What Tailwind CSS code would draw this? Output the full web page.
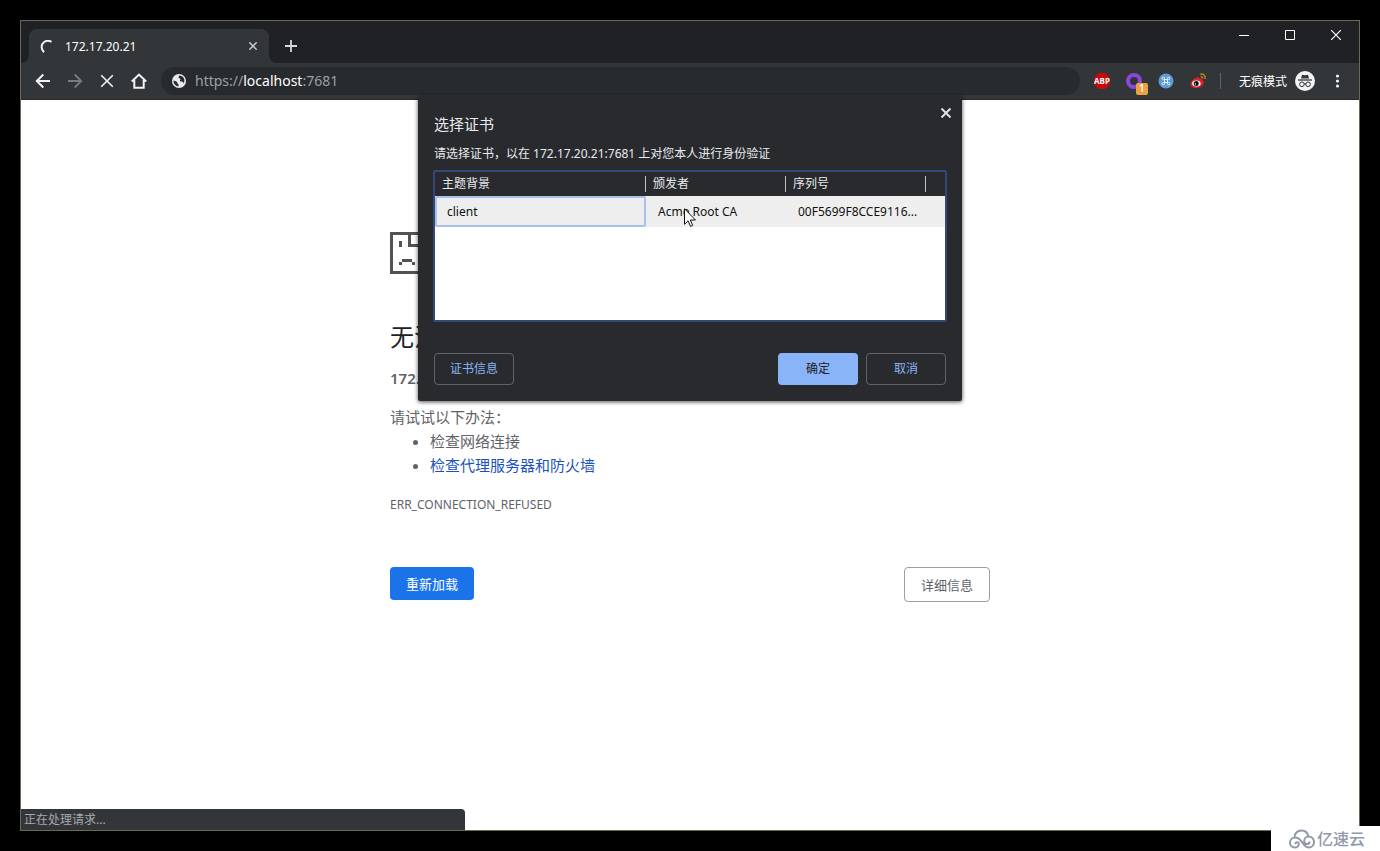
<!DOCTYPE html>
<html lang="zh-CN">
<head>
<meta charset="utf-8">
<title>172.17.20.21</title>
<script src="https://cdn.jsdelivr.net/npm/@tailwindcss/browser@4"></script>
</head>
<body class="relative flex h-screen flex-col bg-black p-5 font-['Noto_Sans','Noto_Sans_CJK_SC',sans-serif] text-xs">
<div class="relative flex min-h-0 flex-1 flex-col border border-[#6b6a55] bg-white">

  <!-- Tab strip -->
  <header class="flex h-[42px] shrink-0 items-end bg-[#202124]">
    <div class="h-2 w-2 bg-[#323639]"><div class="h-2 w-2 rounded-br-lg bg-[#202124]"></div></div>
    <div class="flex h-[34px] w-60 items-center rounded-t-lg bg-[#323639] pr-[10px] pl-[11px] text-white">
      <svg class="mr-3 size-[13px]" viewBox="0 0 13 13" fill="none" stroke="#f1f3f4" stroke-width="2"><path d="M11.500 1.800C9 .6 6.200.6 4.200 2C1 4.200.6 9 4 12.200"/></svg>
      <span class="flex-1 pt-px">172.17.20.21</span>
      <button type="button" aria-label="关闭标签页" class="p-0.5"><svg class="size-2" viewBox="0 0 8 8" stroke="#c8cacc" stroke-width="1.500"><path d="M.3.3l7.400 7.400M7.700.3L.3 7.700"/></svg></button>
    </div>
    <div class="h-2 w-2 bg-[#323639]"><div class="h-2 w-2 rounded-bl-lg bg-[#202124]"></div></div>
    <button type="button" aria-label="打开新的标签页" class="mb-[11px] ml-2"><svg class="size-3" viewBox="0 0 12 12" stroke="#d5d7d9" stroke-width="1.800"><path d="M6 0v12M0 6h12"/></svg></button>
    <div class="ml-auto flex self-start">
      <button type="button" aria-label="最小化" class="flex h-7 w-[46px] items-center justify-center"><svg class="size-[10px]" viewBox="0 0 10 10" stroke="#fff"><path d="M0 5.500h10"/></svg></button>
      <button type="button" aria-label="最大化" class="flex h-7 w-[46px] items-center justify-center"><svg class="size-[10px]" viewBox="0 0 10 10" stroke="#fff" fill="none"><path d="M.5.5h9v9h-9z"/></svg></button>
      <button type="button" aria-label="关闭" class="flex h-7 w-[46px] items-center justify-center"><svg class="size-[10px]" viewBox="0 0 10 10" stroke="#fff" stroke-width="1.200"><path d="M0 0l10 10M10 0L0 10"/></svg></button>
    </div>
  </header>

  <!-- Toolbar -->
  <div class="flex h-[37px] shrink-0 items-center border-b border-[#28292a] bg-[#323639] pr-[15px] pl-[14px]">
    <nav class="flex items-center gap-4 text-white">
      <button type="button" aria-label="后退"><svg class="size-4" viewBox="0 0 16 16" fill="none" stroke="#f1f3f4" stroke-width="2"><path d="M15 8H2M8.300 1.500L1.800 8l6.500 6.500"/></svg></button>
      <button type="button" aria-label="前进"><svg class="size-4" viewBox="0 0 16 16" fill="none" stroke="#797c7e" stroke-width="1.800"><path d="M1 8h13M7.700 1.500L14.200 8l-6.500 6.500"/></svg></button>
      <button type="button" aria-label="停止"><svg class="size-4" viewBox="0 0 16 16" fill="none" stroke="#f1f3f4" stroke-width="1.600"><path d="M2.200 2.200l11.600 11.600M13.800 2.200L2.200 13.800"/></svg></button>
      <button type="button" aria-label="主页"><svg class="size-4" viewBox="0 0 16 16" fill="none" stroke="#f1f3f4" stroke-width="2"><path d="M.8 8.500L8 1.600l7.200 6.900M3.300 7v7.800h9.400V7"/></svg></button>
    </nav>
    <div class="ml-[14px] flex h-7 flex-1 items-center gap-[9px] rounded-full bg-[#282b2e] px-[11px]">
      <svg class="size-[14px]" viewBox="0 0 14 14"><circle cx="7" cy="7" r="7" fill="#e8eaed"/><path d="M1.500 6.500c1 .6 2.500.6 3.300 1.300.8.800.3 1.700 1.200 2.300.9.500.6 1.500.5 2.400C3.500 12.200 1.400 9.600 1.500 6.500zM7.500 1.400c-.3 1-1 1.100-1 2 .1 1 1.800.500 1.900 1.500.1 1-1 1.300-.4 2.100.7 1 2.300.3 3 1 .5.600.3 1.300.1 1.900 2.600-3.200 1.200-8-3.600-8.500z" fill="#282b2e"/></svg>
      <div class="flex-1 text-sm text-[#9aa0a6]">https://<span class="text-white">localhost</span>:7681</div>
    </div>
    <div class="ml-[14px] flex items-center gap-4">
      <button type="button" aria-label="Adblock Plus" class="flex size-4 items-center justify-center bg-[#c90a0a] text-[8px] font-bold text-white [clip-path:polygon(30%_0,70%_0,100%_30%,100%_70%,70%_100%,30%_100%,0_70%,0_30%)]">ABP</button>
      <button type="button" aria-label="代理" class="relative size-4">
        <svg class="size-4" viewBox="0 0 16 16" fill="none"><circle cx="8" cy="8" r="6" stroke="#8d46dc" stroke-width="4"/></svg>
        <span class="absolute top-[10px] left-[10px] flex size-3 items-center justify-center rounded-xs bg-[#e9a343] text-[10px] font-medium text-white">1</span>
      </button>
      <button type="button" aria-label="快捷键"><svg class="size-4" viewBox="0 0 16 16" fill="none"><circle cx="8" cy="8" r="7.500" fill="#5c9bd8"/><path d="M6.500 6.500h3v3h-3zM6.500 6.500H5.300a1.200 1.200 0 1 1 1.200-1.200zM9.500 6.500V5.300a1.200 1.200 0 1 1 1.200 1.200zM9.500 9.500h1.200a1.200 1.200 0 1 1-1.200 1.200zM6.500 9.500v1.200a1.200 1.200 0 1 1-1.200-1.200z" stroke="#e2effb"/></svg></button>
      <button type="button" aria-label="微博"><svg class="size-4" viewBox="0 0 16 16" fill="none"><path d="M7 4.500c1.200-.6 2.500-.4 2.200 1.300 1.800-.7 3.400-.2 2.800 1.500 1.600.5 2 1.500 1.600 2.900C12.700 13.200 9.700 15 6.300 15 2.800 15 .5 13.300.5 10.900.5 8.500 4 5.300 7 4.500z" fill="#e1222b"/><ellipse cx="6.400" cy="10.600" rx="4.200" ry="3" fill="#fff"/><circle cx="6.200" cy="10.600" r="2.500" fill="#111"/><circle cx="5.400" cy="11" r=".7" fill="#fff"/><path d="M10.300 1.200c3-.8 5.400 1.600 4.700 4.600M10.600 3.700c1.300-.3 2.200.6 1.900 1.800" stroke="#b8861c" stroke-width="1.500"/></svg></button>
    </div>
    <div class="ml-[14px] h-4 w-px bg-[#5f6368]"></div>
    <div class="ml-[18px] flex items-center gap-2 text-white">
      <span class="pt-px">无痕模式</span>
      <svg class="size-5" viewBox="0 0 20 20" fill="none"><circle cx="10" cy="10" r="10" fill="#f1f3f4"/><path d="M7 3.700l3 .5 3-.5L14 7.500H6z" fill="#323639"/><path d="M3 9h14" stroke="#323639" stroke-width="1.300"/><circle cx="6.900" cy="13.300" r="2.300" stroke="#323639"/><circle cx="13.100" cy="13.300" r="2.300" stroke="#323639"/><path d="M9 13c.6-.4 1.400-.4 2 0" stroke="#323639"/></svg>
    </div>
    <button type="button" aria-label="菜单" class="ml-4 p-1"><svg class="h-[14px] w-[5px]" viewBox="0 0 5 14" fill="#f1f3f4"><circle cx="2.500" cy="2" r="1.600"/><circle cx="2.500" cy="7" r="1.600"/><circle cx="2.500" cy="12" r="1.600"/></svg></button>
  </div>

  <!-- Error page -->
  <main class="mx-auto w-full max-w-[600px] pt-[132px] text-[15px] leading-6 text-[#5f6368]">
    <svg class="size-[42px]" viewBox="0 0 42 42" fill="#535353" shape-rendering="crispEdges"><path d="M0 0h30v3H3v36h36V12h3v30H0zM18 0h3v12h18v3H18zM30 0h3v3h-3zM33 3h3v3h-3zM36 6h3v3h-3zM39 9h3v3h-3zM9 9h3v6H9zM12 27h10v3H12zM9 30h3v3H9zM22 30h3v3h-3z"/></svg>
    <h1 class="mt-12 text-2xl leading-[30px] text-[#202124]">无法</h1>
    <p class="mt-[14px]"><strong class="text-[15px] font-semibold">172.</strong></p>
    <p class="mt-[15px]">请试试以下办法：</p>
    <ul class="list-disc pl-10">
      <li>检查网络连接</li>
      <li><a href="#" class="text-[#1a53c0]">检查代理服务器和防火墙</a></li>
    </ul>
    <p class="mt-4 text-xs leading-6">ERR_CONNECTION_REFUSED</p>
    <div class="mt-[50px] flex items-start justify-between">
      <button type="button" class="h-[33px] rounded bg-[#1a73e8] px-4 text-[13px] text-white">重新加载</button>
      <button type="button" class="h-[35px] rounded border border-[#9aa0a6] px-4 text-[13px]">详细信息</button>
    </div>
  </main>

  <!-- Status bubble -->
  <div class="absolute bottom-0 left-0 flex h-[21px] w-[444px] items-center rounded-tr bg-[#323639] px-[3px] text-[#a8abae]">正在处理请求...</div>

  <!-- Certificate dialog -->
  <div class="absolute inset-x-0 top-[75px] flex justify-center">
    <section role="dialog" aria-labelledby="dlg-title" class="relative w-[544px] rounded-b-xs bg-[#292a2d] px-4 pt-4 pb-4 text-[#e8eaed] shadow-[0_1px_4px_rgba(0,0,0,0.7)]">
      <button type="button" aria-label="关闭对话框" class="absolute top-3 right-[11px]"><svg class="size-[10px]" viewBox="0 0 10 10" stroke="#e0e1e3" stroke-width="2"><path d="M.5.500l9 9M9.500.500l-9 9"/></svg></button>
      <h2 id="dlg-title" class="text-[15px] leading-6">选择证书</h2>
      <p class="mt-2 leading-5">请选择证书，以在 172.17.20.21:7681 上对您本人进行身份验证</p>
      <div class="-mx-px mt-[6px] h-[152px] rounded-xs border-2 border-[#34497a] bg-white">
        <table class="w-full table-fixed border-collapse text-left">
          <colgroup><col class="w-[211px]"><col class="w-[140px]"><col class="w-[140px]"><col></colgroup>
          <thead class="bg-[#292a2d]">
            <tr class="h-6">
              <th class="p-0 font-normal"><div class="border-r border-[#bdc1c6] pl-[7px] leading-4">主题背景</div></th>
              <th class="p-0 font-normal"><div class="border-r border-[#bdc1c6] pl-[7px] leading-4">颁发者</div></th>
              <th class="p-0 font-normal"><div class="border-r border-[#bdc1c6] pl-[7px] leading-4">序列号</div></th>
              <th class="p-0"></th>
            </tr>
          </thead>
          <tbody class="bg-[#eeeeee] text-[#111]">
            <tr class="h-[31px]">
              <td class="p-0"><div class="flex h-[31px] items-center rounded-xs border-2 border-[#a9c0ea] pl-[10px]">client</div></td>
              <td class="p-0 pl-3">Acme Root CA</td>
              <td class="p-0 pl-3">00F5699F8CCE9116...</td>
              <td class="p-0"></td>
            </tr>
          </tbody>
        </table>
      </div>
      <div class="mt-[31px] flex gap-2">
        <button type="button" class="h-8 w-20 rounded border border-[#5f6368] text-[#8ab4f8]">证书信息</button>
        <button type="button" class="ml-auto h-8 w-20 rounded bg-[#8ab4f8] text-[#202124]">确定</button>
        <button type="button" class="h-8 w-20 rounded border border-[#5f6368] text-[#8ab4f8]">取消</button>
      </div>
      <svg class="absolute top-[112px] left-[266px] h-[19px] w-3" viewBox="0 0 12 19"><path d="M.5.700v15.600l3.600-3.500 2.400 5.600 2.200-.9-2.400-5.500h5.100z" fill="#fff" stroke="#111"/></svg>
    </section>
  </div>
</div>

<!-- Watermark -->
<div class="absolute right-0 bottom-0 flex h-[25px] w-[109px] items-center gap-[2px] bg-white pl-[18px] text-[#8f99a8]">
  <svg class="h-5 w-[26px]" viewBox="0 0 26 20" fill="none" stroke="#8f99a8" stroke-width="2" stroke-linecap="round"><path d="M5.500 8.500C5.200 4.500 8.500 1.500 12.300 1.500c3.600 0 6.300 2.200 6.900 5.500M6.500 14.300c.8-1.700 3.300-1.300 3.300.4 0 2.200-1.800 3.800-4 3.800C3 18.500 1 16.300 1 13.700c0-3 2.300-5.200 5.200-5.200 3.600 0 5.300 2.500 7.300 5.200 1.700 2.600 3 4.800 6 4.800 3.200 0 5.500-2.400 5.500-5.500s-2.300-5.400-5.200-5.400c-2.800 0-4.600 2-4.600 4.300 0 2 1.400 3.200 3 3.200 1.300 0 2.200-.8 2.300-1.900"/></svg>
  <span class="text-base font-medium">亿速云</span>
</div>
</body>
</html>
